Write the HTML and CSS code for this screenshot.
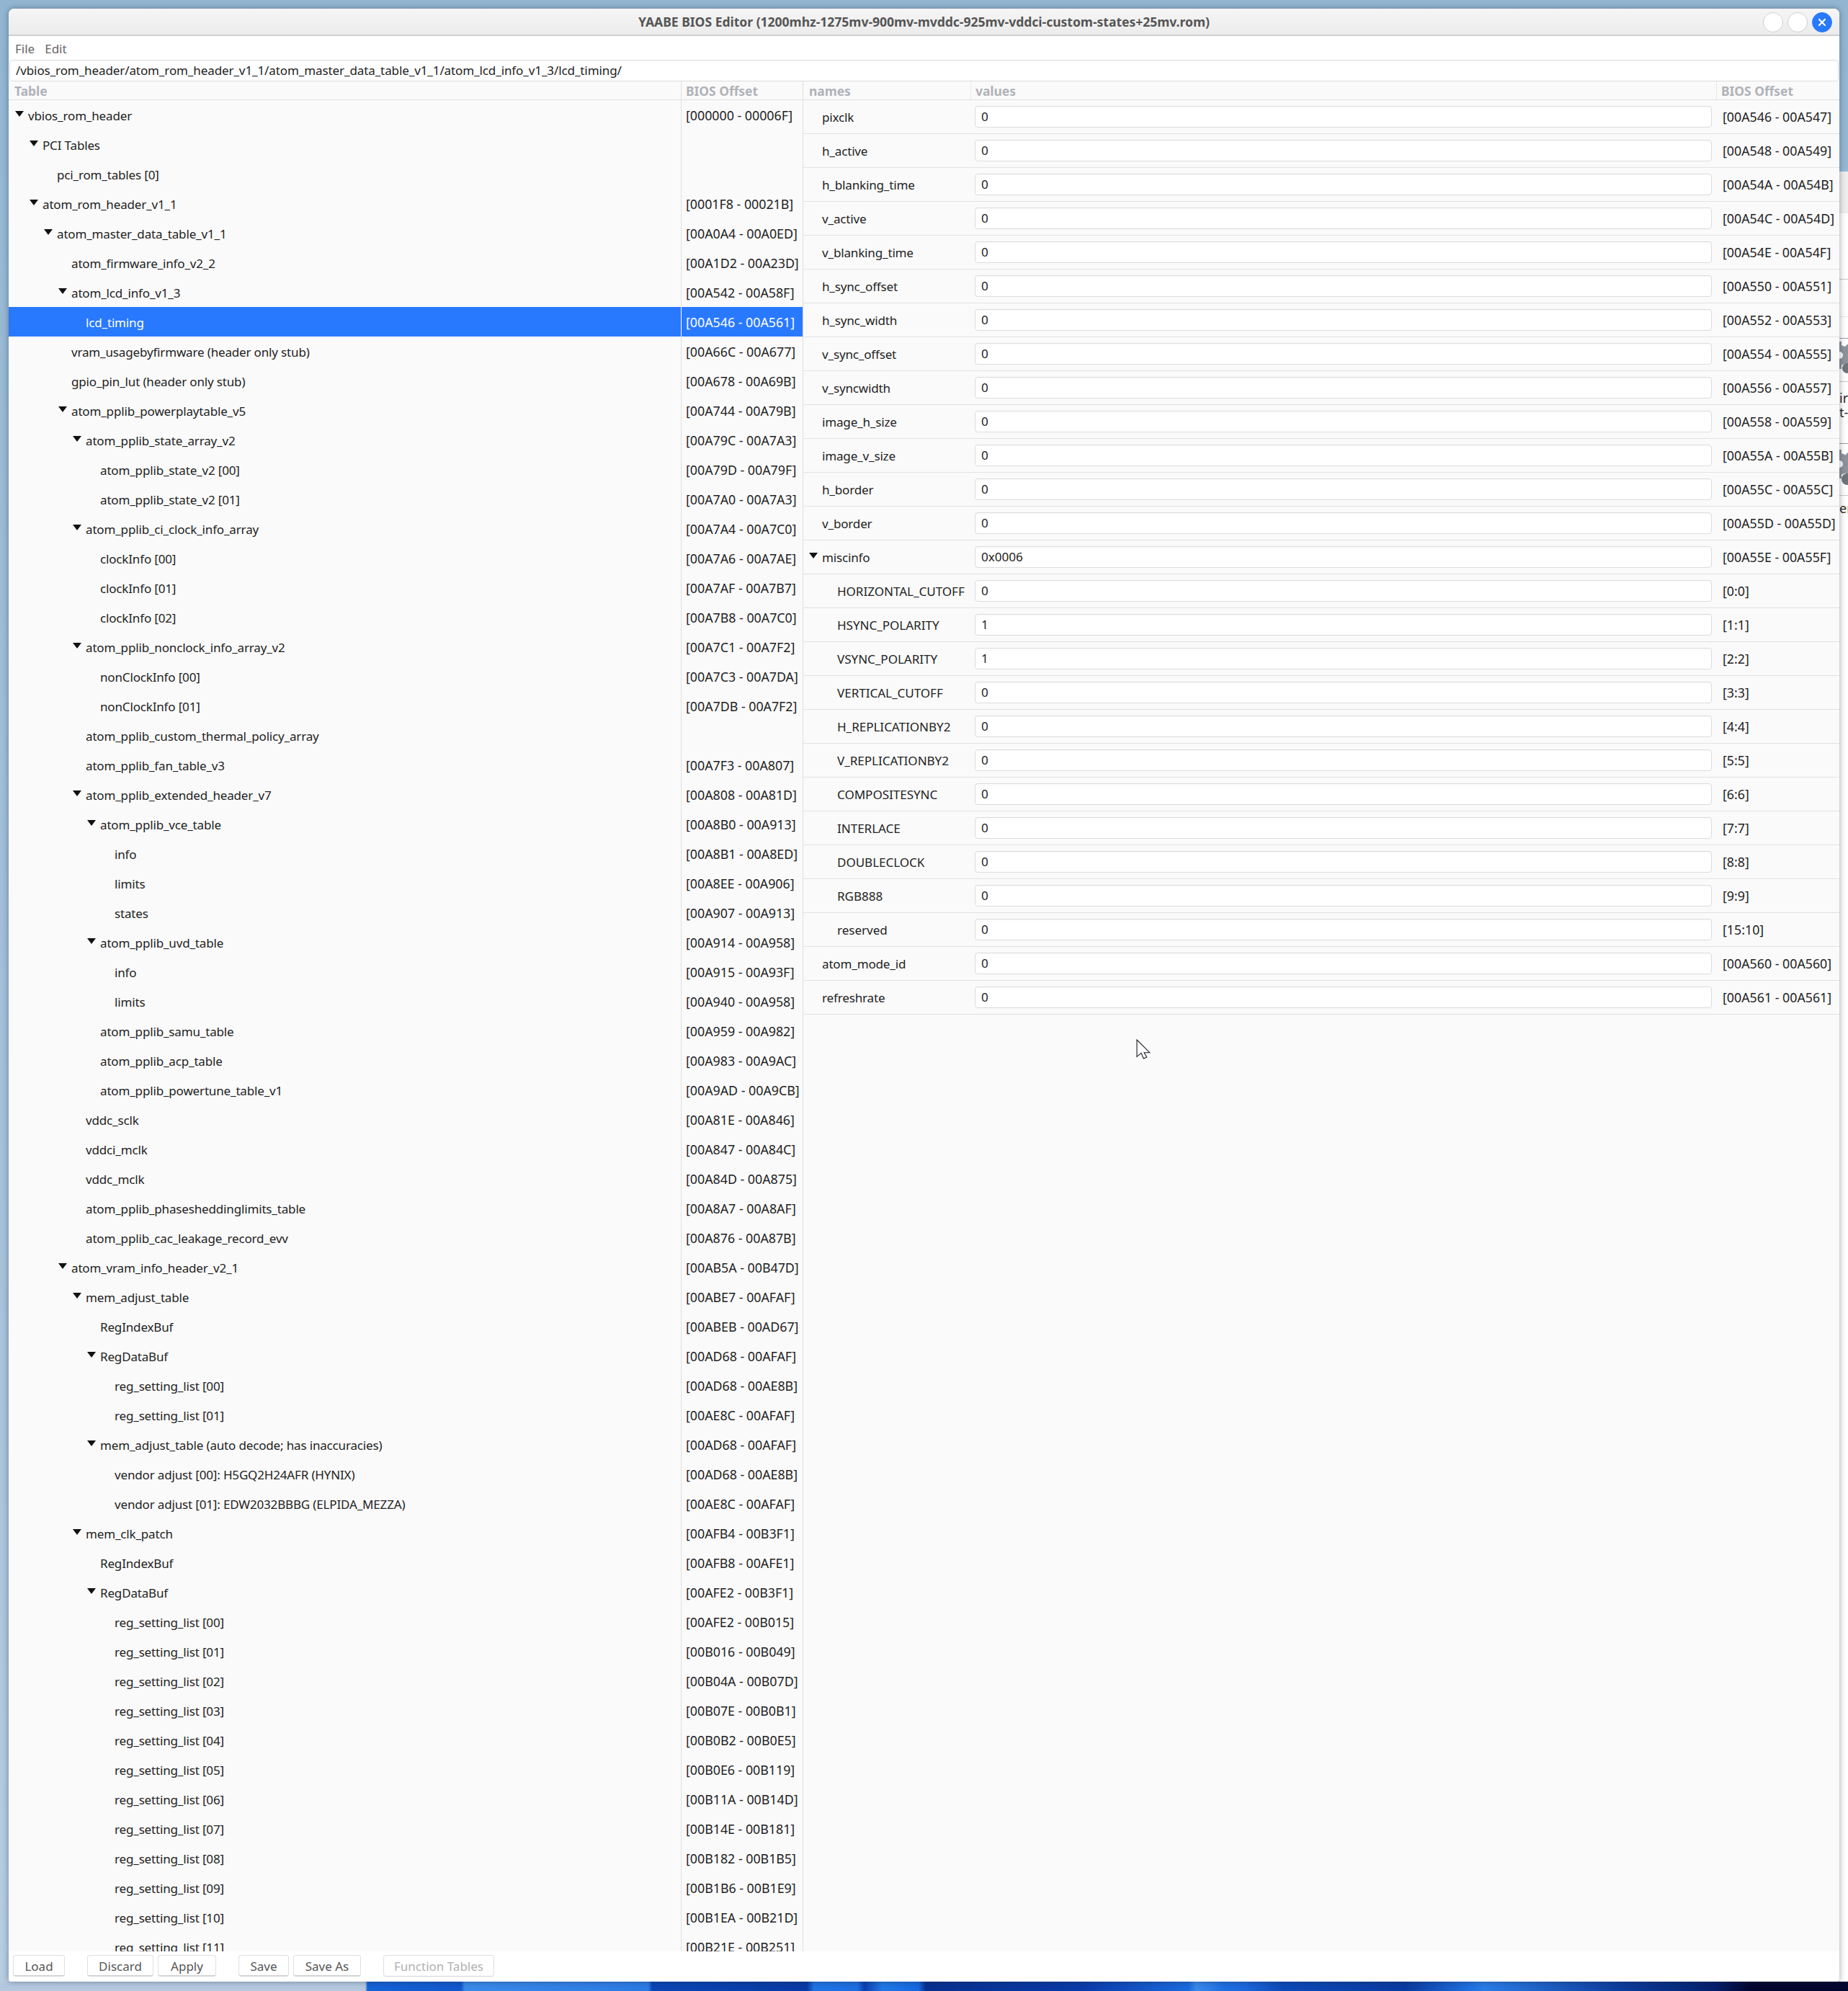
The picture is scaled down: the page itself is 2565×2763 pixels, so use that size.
FILE: index.html
```html
<!DOCTYPE html>
<html lang="en">
<head>
<meta charset="utf-8">
<title>YAABE BIOS Editor</title>
<link rel="stylesheet" href="styles.css">
</head>
<body>
<div class="desktop">
  <div class="behind">
    <div class="b-band"></div>
    <div class="b-a"></div>
    <div class="b-b"></div>
    <div class="b-c"></div>
    <div class="b-gear b-gear1"><svg width="30" height="46" viewBox="0 0 30 46"><g fill="#8d939b"><circle cx="0" cy="20" r="14"/><rect x="-3" y="1" width="6" height="38"/><rect x="-3" y="1" width="6" height="38" transform="rotate(45 0 20)"/><rect x="-3" y="1" width="6" height="38" transform="rotate(-45 0 20)"/></g><circle cx="0" cy="20" r="5" fill="#fff"/><g fill="#6f747b"><circle cx="11" cy="38" r="7"/></g></svg></div>
    <div class="b-text1"><span>ir</span><span>t-</span></div>
    <div class="b-gear b-gear2"><svg width="30" height="54" viewBox="0 0 30 54"><g fill="#8d939b"><circle cx="0" cy="22" r="15"/><rect x="-3" y="2" width="6" height="40"/><rect x="-3" y="2" width="6" height="40" transform="rotate(45 0 22)"/><rect x="-3" y="2" width="6" height="40" transform="rotate(-45 0 22)"/></g><circle cx="0" cy="22" r="5" fill="#fff"/><g fill="#6f747b"><circle cx="11" cy="43" r="8"/></g></svg></div>
    <div class="b-text2"><span>er</span></div>
  </div>

  <div class="window">
    <header class="titlebar">
      <div class="title">YAABE BIOS Editor (1200mhz-1275mv-900mv-mvddc-925mv-vddci-custom-states+25mv.rom)</div>
      <div class="win-btns">
        <span class="win-btn"></span>
        <span class="win-btn"></span>
        <span class="win-btn win-close"><svg width="12" height="12" viewBox="0 0 12 12"><path d="M2 2 10 10M10 2 2 10" stroke="#fff" stroke-width="2.2" stroke-linecap="round"/></svg></span>
      </div>
    </header>
    <nav class="menubar"><span>File</span><span>Edit</span></nav>
    <div class="pathbar">/vbios_rom_header/atom_rom_header_v1_1/atom_master_data_table_v1_1/atom_lcd_info_v1_3/lcd_timing/</div>

    <main class="panes">
      <section class="left">
        <div class="lhead"><div class="th">Table</div><div class="th th-off">BIOS Offset</div></div>
        <div class="tree">
          <div class="tr l0"><div class="n"><i class="ar"></i>vbios_rom_header</div><div class="o">[000000 - 00006F]</div></div>
          <div class="tr l1"><div class="n"><i class="ar"></i>PCI Tables</div><div class="o"></div></div>
          <div class="tr l2"><div class="n"><i class="na"></i>pci_rom_tables [0]</div><div class="o"></div></div>
          <div class="tr l1"><div class="n"><i class="ar"></i>atom_rom_header_v1_1</div><div class="o">[0001F8 - 00021B]</div></div>
          <div class="tr l2"><div class="n"><i class="ar"></i>atom_master_data_table_v1_1</div><div class="o">[00A0A4 - 00A0ED]</div></div>
          <div class="tr l3"><div class="n"><i class="na"></i>atom_firmware_info_v2_2</div><div class="o">[00A1D2 - 00A23D]</div></div>
          <div class="tr l3"><div class="n"><i class="ar"></i>atom_lcd_info_v1_3</div><div class="o">[00A542 - 00A58F]</div></div>
          <div class="tr l4 sel"><div class="n"><i class="na"></i>lcd_timing</div><div class="o">[00A546 - 00A561]</div></div>
          <div class="tr l3"><div class="n"><i class="na"></i>vram_usagebyfirmware (header only stub)</div><div class="o">[00A66C - 00A677]</div></div>
          <div class="tr l3"><div class="n"><i class="na"></i>gpio_pin_lut (header only stub)</div><div class="o">[00A678 - 00A69B]</div></div>
          <div class="tr l3"><div class="n"><i class="ar"></i>atom_pplib_powerplaytable_v5</div><div class="o">[00A744 - 00A79B]</div></div>
          <div class="tr l4"><div class="n"><i class="ar"></i>atom_pplib_state_array_v2</div><div class="o">[00A79C - 00A7A3]</div></div>
          <div class="tr l5"><div class="n"><i class="na"></i>atom_pplib_state_v2 [00]</div><div class="o">[00A79D - 00A79F]</div></div>
          <div class="tr l5"><div class="n"><i class="na"></i>atom_pplib_state_v2 [01]</div><div class="o">[00A7A0 - 00A7A3]</div></div>
          <div class="tr l4"><div class="n"><i class="ar"></i>atom_pplib_ci_clock_info_array</div><div class="o">[00A7A4 - 00A7C0]</div></div>
          <div class="tr l5"><div class="n"><i class="na"></i>clockInfo [00]</div><div class="o">[00A7A6 - 00A7AE]</div></div>
          <div class="tr l5"><div class="n"><i class="na"></i>clockInfo [01]</div><div class="o">[00A7AF - 00A7B7]</div></div>
          <div class="tr l5"><div class="n"><i class="na"></i>clockInfo [02]</div><div class="o">[00A7B8 - 00A7C0]</div></div>
          <div class="tr l4"><div class="n"><i class="ar"></i>atom_pplib_nonclock_info_array_v2</div><div class="o">[00A7C1 - 00A7F2]</div></div>
          <div class="tr l5"><div class="n"><i class="na"></i>nonClockInfo [00]</div><div class="o">[00A7C3 - 00A7DA]</div></div>
          <div class="tr l5"><div class="n"><i class="na"></i>nonClockInfo [01]</div><div class="o">[00A7DB - 00A7F2]</div></div>
          <div class="tr l4"><div class="n"><i class="na"></i>atom_pplib_custom_thermal_policy_array</div><div class="o"></div></div>
          <div class="tr l4"><div class="n"><i class="na"></i>atom_pplib_fan_table_v3</div><div class="o">[00A7F3 - 00A807]</div></div>
          <div class="tr l4"><div class="n"><i class="ar"></i>atom_pplib_extended_header_v7</div><div class="o">[00A808 - 00A81D]</div></div>
          <div class="tr l5"><div class="n"><i class="ar"></i>atom_pplib_vce_table</div><div class="o">[00A8B0 - 00A913]</div></div>
          <div class="tr l6"><div class="n"><i class="na"></i>info</div><div class="o">[00A8B1 - 00A8ED]</div></div>
          <div class="tr l6"><div class="n"><i class="na"></i>limits</div><div class="o">[00A8EE - 00A906]</div></div>
          <div class="tr l6"><div class="n"><i class="na"></i>states</div><div class="o">[00A907 - 00A913]</div></div>
          <div class="tr l5"><div class="n"><i class="ar"></i>atom_pplib_uvd_table</div><div class="o">[00A914 - 00A958]</div></div>
          <div class="tr l6"><div class="n"><i class="na"></i>info</div><div class="o">[00A915 - 00A93F]</div></div>
          <div class="tr l6"><div class="n"><i class="na"></i>limits</div><div class="o">[00A940 - 00A958]</div></div>
          <div class="tr l5"><div class="n"><i class="na"></i>atom_pplib_samu_table</div><div class="o">[00A959 - 00A982]</div></div>
          <div class="tr l5"><div class="n"><i class="na"></i>atom_pplib_acp_table</div><div class="o">[00A983 - 00A9AC]</div></div>
          <div class="tr l5"><div class="n"><i class="na"></i>atom_pplib_powertune_table_v1</div><div class="o">[00A9AD - 00A9CB]</div></div>
          <div class="tr l4"><div class="n"><i class="na"></i>vddc_sclk</div><div class="o">[00A81E - 00A846]</div></div>
          <div class="tr l4"><div class="n"><i class="na"></i>vddci_mclk</div><div class="o">[00A847 - 00A84C]</div></div>
          <div class="tr l4"><div class="n"><i class="na"></i>vddc_mclk</div><div class="o">[00A84D - 00A875]</div></div>
          <div class="tr l4"><div class="n"><i class="na"></i>atom_pplib_phasesheddinglimits_table</div><div class="o">[00A8A7 - 00A8AF]</div></div>
          <div class="tr l4"><div class="n"><i class="na"></i>atom_pplib_cac_leakage_record_evv</div><div class="o">[00A876 - 00A87B]</div></div>
          <div class="tr l3"><div class="n"><i class="ar"></i>atom_vram_info_header_v2_1</div><div class="o">[00AB5A - 00B47D]</div></div>
          <div class="tr l4"><div class="n"><i class="ar"></i>mem_adjust_table</div><div class="o">[00ABE7 - 00AFAF]</div></div>
          <div class="tr l5"><div class="n"><i class="na"></i>RegIndexBuf</div><div class="o">[00ABEB - 00AD67]</div></div>
          <div class="tr l5"><div class="n"><i class="ar"></i>RegDataBuf</div><div class="o">[00AD68 - 00AFAF]</div></div>
          <div class="tr l6"><div class="n"><i class="na"></i>reg_setting_list [00]</div><div class="o">[00AD68 - 00AE8B]</div></div>
          <div class="tr l6"><div class="n"><i class="na"></i>reg_setting_list [01]</div><div class="o">[00AE8C - 00AFAF]</div></div>
          <div class="tr l5"><div class="n"><i class="ar"></i>mem_adjust_table (auto decode; has inaccuracies)</div><div class="o">[00AD68 - 00AFAF]</div></div>
          <div class="tr l6"><div class="n"><i class="na"></i>vendor adjust [00]: H5GQ2H24AFR (HYNIX)</div><div class="o">[00AD68 - 00AE8B]</div></div>
          <div class="tr l6"><div class="n"><i class="na"></i>vendor adjust [01]: EDW2032BBBG (ELPIDA_MEZZA)</div><div class="o">[00AE8C - 00AFAF]</div></div>
          <div class="tr l4"><div class="n"><i class="ar"></i>mem_clk_patch</div><div class="o">[00AFB4 - 00B3F1]</div></div>
          <div class="tr l5"><div class="n"><i class="na"></i>RegIndexBuf</div><div class="o">[00AFB8 - 00AFE1]</div></div>
          <div class="tr l5"><div class="n"><i class="ar"></i>RegDataBuf</div><div class="o">[00AFE2 - 00B3F1]</div></div>
          <div class="tr l6"><div class="n"><i class="na"></i>reg_setting_list [00]</div><div class="o">[00AFE2 - 00B015]</div></div>
          <div class="tr l6"><div class="n"><i class="na"></i>reg_setting_list [01]</div><div class="o">[00B016 - 00B049]</div></div>
          <div class="tr l6"><div class="n"><i class="na"></i>reg_setting_list [02]</div><div class="o">[00B04A - 00B07D]</div></div>
          <div class="tr l6"><div class="n"><i class="na"></i>reg_setting_list [03]</div><div class="o">[00B07E - 00B0B1]</div></div>
          <div class="tr l6"><div class="n"><i class="na"></i>reg_setting_list [04]</div><div class="o">[00B0B2 - 00B0E5]</div></div>
          <div class="tr l6"><div class="n"><i class="na"></i>reg_setting_list [05]</div><div class="o">[00B0E6 - 00B119]</div></div>
          <div class="tr l6"><div class="n"><i class="na"></i>reg_setting_list [06]</div><div class="o">[00B11A - 00B14D]</div></div>
          <div class="tr l6"><div class="n"><i class="na"></i>reg_setting_list [07]</div><div class="o">[00B14E - 00B181]</div></div>
          <div class="tr l6"><div class="n"><i class="na"></i>reg_setting_list [08]</div><div class="o">[00B182 - 00B1B5]</div></div>
          <div class="tr l6"><div class="n"><i class="na"></i>reg_setting_list [09]</div><div class="o">[00B1B6 - 00B1E9]</div></div>
          <div class="tr l6"><div class="n"><i class="na"></i>reg_setting_list [10]</div><div class="o">[00B1EA - 00B21D]</div></div>
          <div class="tr l6"><div class="n"><i class="na"></i>reg_setting_list [11]</div><div class="o">[00B21E - 00B251]</div></div>
        </div>
      </section>

      <section class="right">
        <div class="rhead"><div class="th">names</div><div class="th">values</div><div class="th">BIOS Offset</div></div>
        <div class="rr"><div class="rn">pixclk</div><div class="rv"><div class="inp">0</div></div><div class="ro">[00A546 - 00A547]</div></div>
        <div class="rr"><div class="rn">h_active</div><div class="rv"><div class="inp">0</div></div><div class="ro">[00A548 - 00A549]</div></div>
        <div class="rr"><div class="rn">h_blanking_time</div><div class="rv"><div class="inp">0</div></div><div class="ro">[00A54A - 00A54B]</div></div>
        <div class="rr"><div class="rn">v_active</div><div class="rv"><div class="inp">0</div></div><div class="ro">[00A54C - 00A54D]</div></div>
        <div class="rr"><div class="rn">v_blanking_time</div><div class="rv"><div class="inp">0</div></div><div class="ro">[00A54E - 00A54F]</div></div>
        <div class="rr"><div class="rn">h_sync_offset</div><div class="rv"><div class="inp">0</div></div><div class="ro">[00A550 - 00A551]</div></div>
        <div class="rr"><div class="rn">h_sync_width</div><div class="rv"><div class="inp">0</div></div><div class="ro">[00A552 - 00A553]</div></div>
        <div class="rr"><div class="rn">v_sync_offset</div><div class="rv"><div class="inp">0</div></div><div class="ro">[00A554 - 00A555]</div></div>
        <div class="rr"><div class="rn">v_syncwidth</div><div class="rv"><div class="inp">0</div></div><div class="ro">[00A556 - 00A557]</div></div>
        <div class="rr"><div class="rn">image_h_size</div><div class="rv"><div class="inp">0</div></div><div class="ro">[00A558 - 00A559]</div></div>
        <div class="rr"><div class="rn">image_v_size</div><div class="rv"><div class="inp">0</div></div><div class="ro">[00A55A - 00A55B]</div></div>
        <div class="rr"><div class="rn">h_border</div><div class="rv"><div class="inp">0</div></div><div class="ro">[00A55C - 00A55C]</div></div>
        <div class="rr"><div class="rn">v_border</div><div class="rv"><div class="inp">0</div></div><div class="ro">[00A55D - 00A55D]</div></div>
        <div class="rr"><div class="rn rn-parent"><i class="ar"></i>miscinfo</div><div class="rv"><div class="inp">0x0006</div></div><div class="ro">[00A55E - 00A55F]</div></div>
        <div class="rr"><div class="rn sub">HORIZONTAL_CUTOFF</div><div class="rv"><div class="inp">0</div></div><div class="ro">[0:0]</div></div>
        <div class="rr"><div class="rn sub">HSYNC_POLARITY</div><div class="rv"><div class="inp">1</div></div><div class="ro">[1:1]</div></div>
        <div class="rr"><div class="rn sub">VSYNC_POLARITY</div><div class="rv"><div class="inp">1</div></div><div class="ro">[2:2]</div></div>
        <div class="rr"><div class="rn sub">VERTICAL_CUTOFF</div><div class="rv"><div class="inp">0</div></div><div class="ro">[3:3]</div></div>
        <div class="rr"><div class="rn sub">H_REPLICATIONBY2</div><div class="rv"><div class="inp">0</div></div><div class="ro">[4:4]</div></div>
        <div class="rr"><div class="rn sub">V_REPLICATIONBY2</div><div class="rv"><div class="inp">0</div></div><div class="ro">[5:5]</div></div>
        <div class="rr"><div class="rn sub">COMPOSITESYNC</div><div class="rv"><div class="inp">0</div></div><div class="ro">[6:6]</div></div>
        <div class="rr"><div class="rn sub">INTERLACE</div><div class="rv"><div class="inp">0</div></div><div class="ro">[7:7]</div></div>
        <div class="rr"><div class="rn sub">DOUBLECLOCK</div><div class="rv"><div class="inp">0</div></div><div class="ro">[8:8]</div></div>
        <div class="rr"><div class="rn sub">RGB888</div><div class="rv"><div class="inp">0</div></div><div class="ro">[9:9]</div></div>
        <div class="rr"><div class="rn sub">reserved</div><div class="rv"><div class="inp">0</div></div><div class="ro">[15:10]</div></div>
        <div class="rr"><div class="rn">atom_mode_id</div><div class="rv"><div class="inp">0</div></div><div class="ro">[00A560 - 00A560]</div></div>
        <div class="rr"><div class="rn">refreshrate</div><div class="rv"><div class="inp">0</div></div><div class="ro">[00A561 - 00A561]</div></div>
      </section>
    </main>

    <footer class="toolbar">
      <div class="btn b-load">Load</div>
      <div class="group">
        <div class="btn b-discard">Discard</div>
        <div class="btn b-apply">Apply</div>
      </div>
      <div class="group">
        <div class="btn b-save">Save</div>
        <div class="btn b-saveas">Save As</div>
      </div>
      <div class="btn b-func disabled">Function Tables</div>
    </footer>

    <svg class="cursor" width="20" height="28" viewBox="0 0 20 28"><path d="M1 1V24.3L7 19.3 10.3 27 14.7 25 11 18.7H18.7Z" fill="#fff" stroke="#1a1a24" stroke-width="1.1"/></svg>
  </div>

  <div class="wallpaper"></div>
</div>
</body>
</html>
```

FILE: styles.css
```css
* { box-sizing: border-box; }
html, body { margin: 0; padding: 0; }
body {
  font-family: "Noto Sans", "Open Sans", sans-serif;
  font-size: 17px;
  color: #222;
}
.desktop {
  position: relative;
  width: 2565px;
  height: 2763px;
  overflow: hidden;
  display: flex;
  flex-direction: column;
  padding-top: 12px;
  background: linear-gradient(180deg, #92b6d2 0%, #9dbdd7 30%, #a9c4dc 70%, #b8cde2 100%);
}
/* window on the desktop behind the main one */
.behind {
  position: absolute;
  left: 2553px;
  top: 238px;
  width: 12px;
  bottom: 13px;
  background: #fff;
  display: flex;
  flex-direction: column;
  overflow: hidden;
}
.b-band { height: 58px; background: #eeeeee; }
.b-a { height: 92px; border-bottom: 1px solid #c8c8c8; }
.b-b { height: 52px; border-bottom: 1px solid #e6e6e6; }
.b-c { height: 30px; border-bottom: 1px solid #9a9a9a; }
.b-gear { padding-top: 3px; overflow: hidden; }
.b-gear svg { display: block; }
.b-gear1 { height: 60px; border-bottom: 1px solid #c8c8c8; }
.b-text1 { height: 86px; border-bottom: 1px solid #9a9a9a; display: flex; flex-direction: column; padding-top: 12px; line-height: 20px; font-size: 18px; overflow: hidden; }
.b-gear2 { height: 72px; padding-top: 6px; border-bottom: 1px solid #c8c8c8; }
.b-text2 { font-size: 18px; line-height: 20px; padding-top: 7px; overflow: hidden; }

/* main window */
.window {
  position: relative;
  margin-left: 12px;
  width: 2541px;
  height: 2738px;
  background: #fff;
  border-radius: 8px 8px 4px 4px;
  box-shadow: 0 0 9px rgba(30, 40, 60, .45);
  display: flex;
  flex-direction: column;
  overflow: hidden;
}
.titlebar {
  position: relative;
  flex: 0 0 38px;
  display: flex;
  align-items: center;
  justify-content: center;
  background: linear-gradient(180deg, #f5f5f5, #ececec);
  border-bottom: 2px solid #cfcfcf;
}
.title { font-weight: 700; font-size: 17.5px; color: #555; }
.win-btns { position: absolute; right: 10px; top: 5px; display: flex; gap: 6px; }
.win-btn {
  width: 28px; height: 28px; border-radius: 50%;
  background: #fff; border: 1px solid #cfcfcf;
  display: flex; align-items: center; justify-content: center;
}
.win-close { background: #2979ff; border-color: #2979ff; }
.menubar {
  flex: 0 0 33px;
  display: flex;
  align-items: center;
  gap: 14px;
  padding: 1px 0 0 9px;
  background: #fff;
  color: #666;
}
.pathbar {
  flex: 0 0 30px;
  margin: 0 1px;
  padding-left: 8px;
  line-height: 28px;
  letter-spacing: -0.1px;
  background: #fff;
  border: 1px solid #dcdcdc;
  border-radius: 4px;
  color: #222;
  white-space: nowrap;
}
.panes { flex: 1 1 0; min-height: 0; display: flex; background: #fafafa; }
.th { height: 25px; font-size: 17.4px; font-weight: 700; color: #b0b2b8; padding-left: 8px; line-height: 26px; white-space: nowrap; }

/* left table */
.left { flex: 0 0 1103px; display: flex; flex-direction: column; border-right: 1px solid #dedede; min-height: 0; overflow: hidden; }
.lhead { flex: 0 0 26px; display: grid; grid-template-columns: 933px 1fr; border-bottom: 1px solid #e0e0e0; }
.th-off { border-left: 1px solid #e0e0e0; padding-left: 6px; }
.tree { flex: 1 1 0; min-height: 0; overflow: hidden; }
.tr { height: 41px; display: grid; grid-template-columns: 933px 1fr; }
.n { display: flex; align-items: center; padding-top: 1px; letter-spacing: -0.16px; white-space: nowrap; }
.o { display: flex; align-items: center; padding-top: 1px; font-size: 17.8px; border-left: 1px solid #e0e0e0; padding-left: 6px; white-space: nowrap; }
.l0 .n { padding-left: 9px; }
.l1 .n { padding-left: 29px; }
.l2 .n { padding-left: 49px; }
.l3 .n { padding-left: 69px; }
.l4 .n { padding-left: 89px; }
.l5 .n { padding-left: 109px; }
.l6 .n { padding-left: 129px; }
.ar, .na { display: inline-block; flex: 0 0 18px; width: 18px; height: 8px; }
.ar {
  position: relative;
  top: -2px;
  background: linear-gradient(#111, #111) no-repeat;
  background-size: 12px 8px;
  clip-path: polygon(0 0, 12px 0, 6px 8px);
}
.sel { background: #2979ff; color: #fff; }
.sel .o { border-left-color: #fff; }

/* right table */
.right { flex: 1 1 0; min-width: 0; display: flex; flex-direction: column; }
.rhead, .rr { display: grid; grid-template-columns: 232px 1035px 1fr; }
.rhead { flex: 0 0 26px; border-bottom: 1px solid #e0e0e0; }
.rhead .th + .th { border-left: 1px solid #e8e8e8; padding-left: 6px; }
.rr { flex: 0 0 47px; border-bottom: 1px solid #e2e2e2; align-items: center; }
.rn { padding-left: 26px; letter-spacing: -0.15px; white-space: nowrap; }
.rn.sub { padding-left: 47px; letter-spacing: 0; }
.rn-parent { display: flex; align-items: center; padding-left: 8px; }
.rv { padding: 0 6px; }
.inp {
  height: 30px;
  line-height: 28px;
  padding-left: 8px;
  background: #fff;
  border: 1px solid #dcdcdc;
  border-radius: 4px;
  box-shadow: inset 0 2px 2px rgba(0,0,0,.02);
}
.ro { padding-left: 9px; font-size: 17.8px; white-space: nowrap; }

/* toolbar */
.toolbar {
  flex: 0 0 42px;
  display: flex;
  align-items: flex-start;
  gap: 31px;
  padding: 5px 0 0 6px;
  background: #fff;
}
.group { display: flex; gap: 6px; }
.btn {
  height: 30px;
  line-height: 29px;
  text-align: center;
  background: #fff;
  border: 1px solid #dfdfdf;
  border-bottom: 2px solid #d4d4d4;
  border-radius: 4px;
  color: #555;
}
.b-load { width: 72px; }
.b-discard { width: 92px; }
.b-apply { width: 81px; }
.b-save { width: 70px; }
.b-saveas { width: 94px; }
.b-func { width: 154px; }
.disabled { color: #b0b0b0; border-bottom-width: 1px; }

.cursor { position: absolute; left: 1565px; top: 1430px; }

.wallpaper {
  flex: 0 0 13px;
  background: linear-gradient(90deg,
    #b4c9df 0, #b4c9df 507px,
    #1462d6 510px, #1257cc 640px, #3a8ae8 645px, #2a7ae4 900px,
    #0a46b4 905px, #083aa4 1120px, #1e74e4 1130px, #1c6ee0 1190px, #0a3fae 1200px, #1f78e6 1225px, #1668de 1275px,
    #06308e 1285px, #0a3aa8 1500px, #1a6ade 1650px, #3a8aea 1660px, #1c6ee0 1700px, #1a66da 1730px, #0d4ab8 1780px,
    #0a3aa0 1950px, #1e70e0 2040px, #2a7ce6 2060px, #0c3c9c 2250px, #04206c 2380px, #02052e 2430px, #02052e 100%);
}
```
